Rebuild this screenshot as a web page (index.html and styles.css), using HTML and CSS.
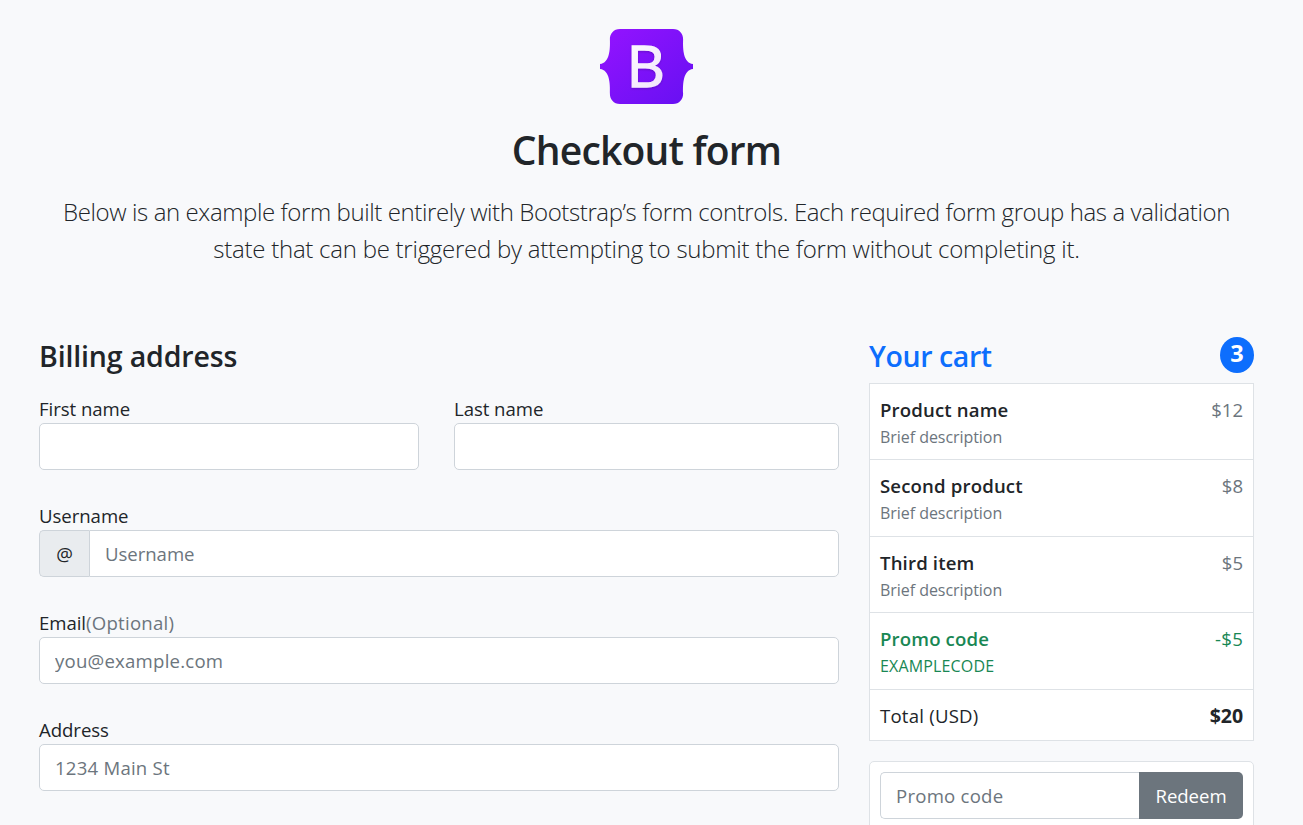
FILE: index.html
```html
<!DOCTYPE html>
<html lang="en">
<head>
<meta charset="utf-8">
<title>Checkout form</title>
<link rel="stylesheet" href="styles.css">
</head>
<body>
<div class="container">
  <header class="intro">
    <svg class="logo" width="93" height="75" viewBox="0 0 93 75" aria-label="Bootstrap">
      <defs>
        <linearGradient id="purple" x1="0" y1="0" x2="1" y2="1"><stop offset="0.1" stop-color="#9013fe"/><stop offset="1" stop-color="#6610f2"/></linearGradient>
        <linearGradient id="letter" x1="0" y1="0" x2="0.6" y2="1"><stop offset="0" stop-color="#fff"/><stop offset="1" stop-color="#f1e5fc"/></linearGradient>
        <filter id="shadow" x="-20%" y="-20%" width="140%" height="140%"><feDropShadow dx="0" dy="1" stdDeviation="1" flood-opacity=".2"/></filter>
      </defs>
      <path fill="url(#purple)" d="M20 0H73C79.500 0 83.300 5 83.100 10.500C82.800 20 83.200 34 93 35V40C83.200 41 82.800 55 83.100 64.500C83.300 70 79.500 75 73 75H20C13.500 75 9.700 70 9.900 64.500C10.200 55 9.800 41 0 40V35C9.800 34 10.200 20 9.900 10.500C9.700 5 13.500 0 20 0Z"/>
      <text class="logo-letter" x="26.500" y="57.500" textLength="38.500" lengthAdjust="spacingAndGlyphs" fill="url(#letter)" stroke="url(#letter)" filter="url(#shadow)">B</text>
    </svg>
    <h1 class="title">Checkout form</h1>
    <p class="lead"><span class="lead-first">Below is an example form built entirely with Bootstrap’s form controls. Each required form group has a validation</span><br><span class="lead-second">state that can be triggered by attempting to submit the form without completing it.</span></p>
  </header>
  <main class="columns">
    <form class="billing">
      <h2 class="heading">Billing address</h2>
      <div class="names">
        <div class="field"><label class="label">First name</label><input class="control" type="text"></div>
        <div class="field"><label class="label">Last name</label><input class="control" type="text"></div>
      </div>
      <div class="field"><label class="label">Username</label>
        <div class="group"><span class="addon">@</span><input class="control grouped-end" type="text" placeholder="Username"></div>
      </div>
      <div class="field"><label class="label">Email<span class="muted optional">(Optional)</span></label><input class="control spaced" type="text" placeholder="you@example.com"></div>
      <div class="field"><label class="label">Address</label><input class="control spaced" type="text" placeholder="1234 Main St"></div>
    </form>
    <aside class="cart">
      <h2 class="heading cart-heading"><span>Your cart</span><span class="badge">3</span></h2>
      <ul class="list">
        <li class="item"><div><h3 class="name">Product name</h3><small class="desc">Brief description</small></div><span class="muted">$12</span></li>
        <li class="item"><div><h3 class="name">Second product</h3><small class="desc">Brief description</small></div><span class="muted">$8</span></li>
        <li class="item"><div><h3 class="name">Third item</h3><small class="desc">Brief description</small></div><span class="muted">$5</span></li>
        <li class="item promo"><div><h3 class="name">Promo code</h3><small class="desc code">EXAMPLECODE</small></div><span class="spaced">-$5</span></li>
        <li class="item total"><span class="spaced">Total (USD)</span><strong class="sum">$20</strong></li>
      </ul>
      <div class="card">
        <div class="group"><input class="control grouped-start spaced" type="text" placeholder="Promo code"><button class="redeem" type="button">Redeem</button></div>
      </div>
    </aside>
  </main>
</div>
</body>
</html>
```
FILE: styles.css
```css
* { box-sizing: border-box; }
html { overflow: hidden; }
body { margin: 0; height: 825px; overflow: hidden; background: #f8f9fb; color: #212529; font: 400 18.6px/27px "Open Sans", "Noto Sans", sans-serif; letter-spacing: -0.05px; }
h1, h2, h3, p, ul { margin: 0; padding: 0; }
.container { width: 1215px; margin-left: 39px; padding-top: 29px; }
.intro { display: flex; flex-direction: column; align-items: center; height: 308px; text-align: center; }
.logo { display: block; overflow: visible; }
.logo-letter { font: 400 56px/1 "Open Sans", sans-serif; letter-spacing: 0; stroke-width: 1.3px; }
.title { margin-top: 22px; font-size: 39px; font-weight: 550; line-height: 48px; letter-spacing: -0.8px; }
.lead { margin-top: 19px; font-size: 24px; font-weight: 300; line-height: 37px; white-space: nowrap; }
.lead-first { letter-spacing: -0.4px; }
.lead-second { letter-spacing: -0.25px; }
.columns { display: grid; grid-template-columns: 800px 385px; gap: 30px; }
.heading { height: 38px; font-size: 28.5px; font-weight: 550; line-height: 38px; letter-spacing: -0.15px; }
.billing { display: flex; flex-direction: column; gap: 33px; }
.billing .heading { margin-bottom: -12px; }
.names { display: grid; grid-template-columns: 380px 385px; gap: 35px; }
.field { display: flex; flex-direction: column; height: 74px; }
.label { height: 27px; line-height: 26px; white-space: nowrap; }
.muted { color: #6c757d; }
.optional { letter-spacing: 0.25px; }
.control { width: 100%; min-width: 0; height: 47px; padding: 0 15px; border: 1px solid #ced4da; border-radius: 5px; background: #fff; color: #212529; font: inherit; letter-spacing: inherit; outline: 0; }
.control::placeholder { color: #6c757d; opacity: 1; }
.spaced { letter-spacing: 0.22px; }
.group { display: flex; }
.addon { flex: 0 0 50px; height: 47px; border: 1px solid #ced4da; border-right: 0; border-radius: 5px 0 0 5px; background: #e9ecef; line-height: 46px; text-align: center; }
.grouped-end { border-radius: 0 5px 5px 0; }
.grouped-start { border-right: 0; border-radius: 5px 0 0 5px; }
.cart-heading { display: flex; justify-content: space-between; align-items: flex-start; color: #0d6efd; letter-spacing: -0.4px; }
.badge { width: 34px; height: 36px; border-radius: 50%; background: #0d6efd; color: #fff; font-size: 23.5px; font-weight: 700; line-height: 33px; letter-spacing: 0; text-align: center; }
.list { margin-top: 8px; list-style: none; border: 1px solid #dee2e6; background: #fff; }
.item { display: flex; justify-content: space-between; height: 76px; padding: 12px 10px 0; border-bottom: 1px solid #dee2e6; }
.item:nth-child(even) { height: 77px; }
.name { font-size: 18.6px; font-weight: 580; line-height: 28px; letter-spacing: 0.15px; }
.desc { display: block; color: #6c757d; font-size: 16px; line-height: 26px; letter-spacing: -0.05px; }
.code { letter-spacing: 0.15px; }
.promo, .promo .desc { color: #198754; }
.item.total { height: 50px; border-bottom: 0; }
.sum { font-size: 19.5px; }
.card { height: 80px; margin-top: 20px; padding: 10px; border: 1px solid #dee2e6; border-radius: 5px; background: #fff; }
.redeem { flex: 0 0 104px; height: 47px; padding: 0; border: 0; border-radius: 0 5px 5px 0; background: #6c757d; color: #fff; font: inherit; letter-spacing: inherit; }
```
